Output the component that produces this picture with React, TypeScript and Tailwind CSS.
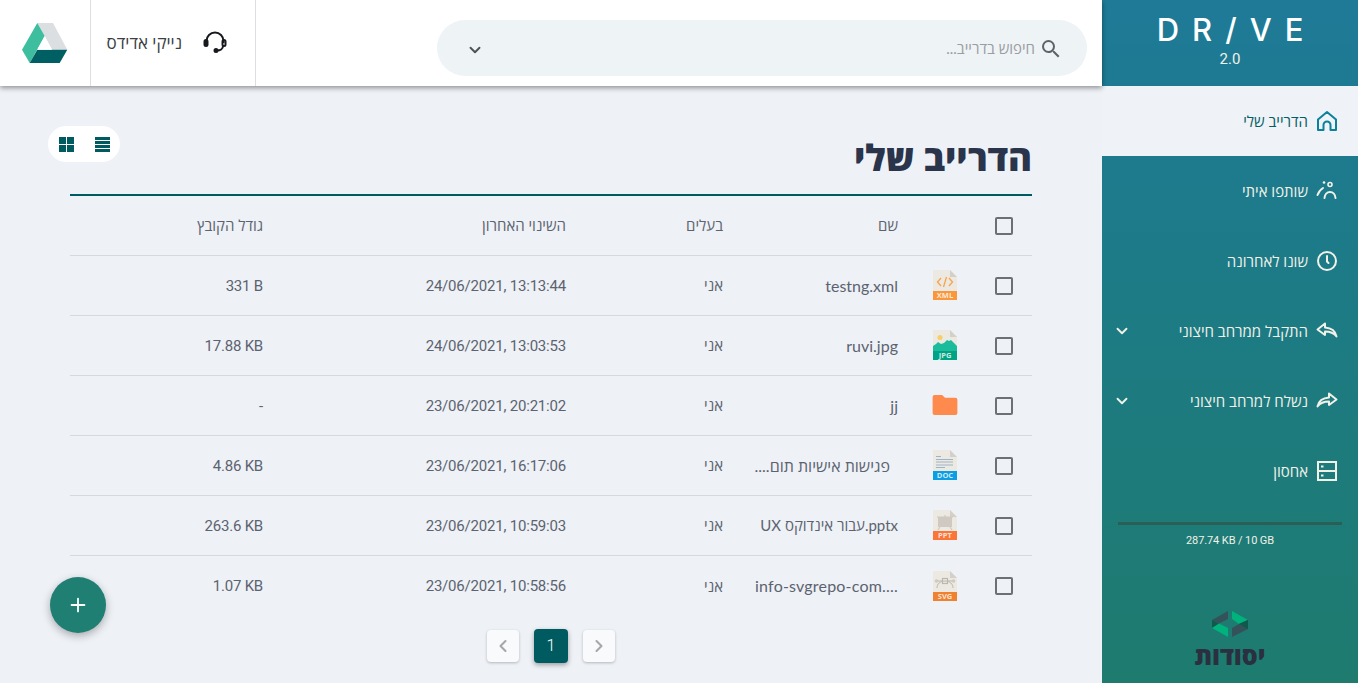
import React from 'react';
import { ChevronDown, ChevronLeft, ChevronRight, Plus } from 'lucide-react';

const font = 'font-["Lato","Open_Sans",sans-serif]';
const numbers = "font-['Roboto'] text-[15px] tracking-[-0.2px]";

const HomeIcon = () => (
  <svg width="22" height="22" viewBox="0 0 22 22" fill="none" stroke="#0b8299" strokeWidth="2" strokeLinejoin="round">
    <path d="M2 9.500 11 2l9 7.500V20H14.500v-5a3.500 3.500 0 0 0-7 0v5H2z" />
  </svg>
);

const PeopleIcon = () => (
  <svg width="22" height="22" viewBox="0 0 22 22" fill="none" stroke="#f2f1e8" strokeWidth="2" strokeLinecap="round">
    <circle cx="14" cy="4.500" r="2" strokeWidth="1.600" />
    <circle cx="8" cy="2.500" r="1.300" fill="#f2f1e8" stroke="none" />
    <path d="M1.500 15c1-3 3-5.500 5.500-7" />
    <path d="M8.500 18c.3-3.500 2.500-6 5.500-6s5.200 2.500 5.500 6" />
  </svg>
);

const ClockIcon = () => (
  <svg width="22" height="22" viewBox="0 0 22 22" fill="none" stroke="#f2f1e8" strokeWidth="2" strokeLinecap="round">
    <circle cx="11" cy="11" r="9" />
    <path d="M11 6v5.500l1.500 1.500" />
  </svg>
);

const ReplyIcon = ({ flip }: { flip?: boolean }) => (
  <svg width="22" height="18" viewBox="0 0 22 18" fill="none" stroke="#f2f1e8" strokeWidth="2" strokeLinejoin="round" className={flip ? '-scale-x-100' : ''}>
    <path d="M9 1.500 1.500 7.500 9 13v-3.500c4.500 0 8.500 1 11.500 5-1-5-4.500-8.500-11.500-9z" />
  </svg>
);

const StorageIcon = () => (
  <svg width="20" height="20" viewBox="0 0 20 20" fill="none" stroke="#f2f1e8" strokeWidth="2">
    <rect x="1" y="1" width="18" height="18" />
    <path d="M1 10h18" />
    <path d="M4 5.500h2.500M4 14.500h2.500" />
  </svg>
);

const SearchIcon = () => (
  <svg width="24" height="24" viewBox="0 0 24 24" fill="#5f6368" className="shrink-0 mt-0.5">
    <path d="M15.500 14h-.79l-.28-.27A6.471 6.471 0 0 0 16 9.500 6.500 6.500 0 1 0 9.500 16c1.610 0 3.090-.59 4.230-1.570l.27.28v.79l5 4.990L20.490 19l-4.990-5zm-6 0C7.010 14 5 11.990 5 9.500S7.010 5 9.500 5 14 7.010 14 9.500 11.990 14 9.500 14z" />
  </svg>
);

const navItems = [
  { label: 'הדרייב שלי', icon: <HomeIcon />, active: true },
  { label: 'שותפו איתי', icon: <PeopleIcon /> },
  { label: 'שונו לאחרונה', icon: <ClockIcon /> },
  { label: 'התקבל ממרחב חיצוני', icon: <ReplyIcon />, more: true },
  { label: 'נשלח למרחב חיצוני', icon: <ReplyIcon flip />, more: true },
  { label: 'אחסון', icon: <StorageIcon /> },
];

const FileIcon = ({ tag, color, children }: { tag: string; color: string; children?: React.ReactNode }) => (
  <svg width="24" height="30" viewBox="0 0 24 30">
    <path d="M0 0h17l7 7v23H0z" fill="#ebe9e1" />
    <path d="M17 0l7 7h-7z" fill="#d3d0c7" />
    {children}
    <rect x="0" y="21" width="24" height="9" fill={color} />
    <text x="12" y="28.300" textAnchor="middle" fontSize="7.500" fontWeight="700" fill="#fff" fillOpacity="0.8" fontFamily="Open Sans, sans-serif">{tag}</text>
  </svg>
);

const FolderIcon = () => (
  <svg width="26" height="20" viewBox="0 0 26 21">
    <path d="M2 0h8l3 3h11a2 2 0 0 1 2 2v14a2 2 0 0 1-2 2H2a2 2 0 0 1-2-2V2a2 2 0 0 1 2-2z" fill="#ff8a4d" />
  </svg>
);

const icons: Record<string, React.ReactNode> = {
  xml: (
    <FileIcon tag="XML" color="#f9973a">
      <path d="M8 8l-3.500 4L8 16M16 8l3.500 4L16 16M13.500 7l-3 10" fill="none" stroke="#f9a34e" strokeWidth="1.300" />
    </FileIcon>
  ),
  jpg: (
    <FileIcon tag="JPG" color="#00a383">
      <circle cx="7" cy="7.500" r="2.500" fill="#f6cf68" />
      <path d="M0 21v-5l3-2 2-2 3 2 3-1 3-3 2 1 2-1 3 3 3 3v5z" fill="#1abc9c" />
    </FileIcon>
  ),
  folder: <FolderIcon />,
  doc: (
    <FileIcon tag="DOC" color="#0c9ee3">
      <path d="M3 6.500h5M3 9.500h17M3 12h17M3 15h17M3 17.500h9" stroke="#9db3c9" strokeWidth="1.200" />
    </FileIcon>
  ),
  ppt: (
    <FileIcon tag="PPT" color="#fb7538">
      <rect x="5" y="7" width="14" height="10" fill="#cfc9c2" />
      <path d="M4 7h16M12 5v2M7 17l-2 3M17 17l2 3" stroke="#cfc9c2" strokeWidth="1.200" />
    </FileIcon>
  ),
  svg: (
    <FileIcon tag="SVG" color="#f0812f">
      <path d="M4 17c0-4 3-7 8-7s8 3 8 7" fill="none" stroke="#bdb6ad" strokeWidth="1" />
      <rect x="9.500" y="7.500" width="5" height="5" fill="none" stroke="#bdb6ad" strokeWidth="1.200" />
      <path d="M2 10h7M15 10h7" stroke="#bdb6ad" strokeWidth="1.200" />
      <circle cx="3.500" cy="10" r="1.800" fill="#cfc9c2" />
      <circle cx="20.500" cy="10" r="1.800" fill="#cfc9c2" />
    </FileIcon>
  ),
};

const rows = [
  { icon: 'xml', name: 'testng.xml', nameCls: 'text-[16px]', date: '24/06/2021, 13:13:44', size: '331 B' },
  { icon: 'jpg', name: 'ruvi.jpg', nameCls: 'text-[16px]', date: '24/06/2021, 13:03:53', size: '17.88 KB' },
  { icon: 'folder', name: 'jj', nameCls: 'text-[16px]', date: '23/06/2021, 20:21:02', size: '-' },
  { icon: 'doc', name: 'פגישות אישיות תום....', nameCls: 'text-[16px] pr-[24px]', date: '23/06/2021, 16:17:06', size: '4.86 KB' },
  { icon: 'ppt', name: 'pptx.עבור אינדוקס UX', nameCls: 'text-[15px]', date: '23/06/2021, 10:59:03', size: '263.6 KB' },
  { icon: 'svg', name: 'info-svgrepo-com....', nameCls: 'text-[16px] tracking-[0.2px]', ltr: true, date: '23/06/2021, 10:58:56', size: '1.07 KB' },
];

const gridCols = 'grid grid-cols-[56px_62px_175px_157px_303px_209px] items-center h-[60px] border-b border-[#d5d9df]';

const Checkbox = () => <div className="w-[18px] h-[18px] border-2 border-[#6d6f73] rounded-[2px] mx-auto" />;

export default function App() {
  return (
    <div dir="rtl" className={`${font} flex w-[1358px] h-[683px] overflow-hidden bg-[#eef1f6] text-[#5c6370]`}>
      {/* sidebar */}
      <aside className="w-[256px] shrink-0 flex flex-col bg-gradient-to-b from-[#1e7a97] to-[#1e7b6e] text-[#f2f1e8]">
        <div className="h-[86px] flex flex-col items-center pt-[10px]">
          <div dir="ltr" className="font-['Inter'] font-medium text-[31px] leading-[39px] tracking-[13px] pl-[13px] text-white">DR/VE</div>
          <div className="font-['Roboto'] text-[15px] leading-[18px] mt-[1px]">2.0</div>
        </div>
        {navItems.map((item) => (
          <div
            key={item.label}
            className={`h-[70px] shrink-0 flex items-center pr-[20px] pl-[11px] text-[15px] ${item.active ? 'bg-[#eff2f7] text-[#035e63]' : ''}`}
          >
            <div className="w-[22px] flex justify-center">{item.icon}</div>
            <span className="mr-[8px]">{item.label}</span>
            {item.more && <ChevronDown size={18} strokeWidth={2.5} className="mr-auto" />}
          </div>
        ))}
        <div className="mx-4 mt-[16px] h-[3px] bg-[#2a5f58]" />
        <div className="font-['Roboto'] text-center text-[11px] tracking-[-0.1px] leading-[16px] mt-[8px]" dir="ltr">287.74 KB / 10 GB</div>
        <div className="flex flex-col items-center mt-[62px]">
          <svg width="36" height="27" viewBox="0 0 36 27">
            <path d="M16 0 0 9v8l7-4.500L16 8z" fill="#34525a" />
            <path d="M0 9l7 4-7 4z" fill="#0f5a4c" />
            <path d="M0 17l7-4.500L16 17v9z" fill="#00b27c" />
            <path d="M20 0l16 9-9 4-7-5z" fill="#00b27c" />
            <path d="M36 9v9l-16 8v-9l7-4z" fill="#34525a" />
            <path d="M36 9l-9 4 9 5z" fill="#0f5a4c" />
          </svg>
          <div className="font-['Open_Sans'] font-extrabold text-[25px] leading-[26px] text-[#2a3040] mt-[4px]">יסודות</div>
        </div>
      </aside>

      {/* main */}
      <main className="relative flex-1 flex flex-col min-w-0">
        <header className="h-[86px] shrink-0 bg-white flex items-center pr-[15px] shadow-[0_2px_5px_rgba(0,0,0,0.4)] z-10">
          <div className="w-[650px] h-[56px] mt-[10px] shrink-0 rounded-[28px] bg-[#eef3f6] flex items-center pr-[24px] pl-[29px]">
            <SearchIcon />
            <span className="mr-[4px] text-[15px] text-[#9a9da1]">חיפוש בדרייב...</span>
            <ChevronDown size={18} strokeWidth={2.5} className="mr-auto mt-1 text-[#4d5156]" />
          </div>
          <div className="mr-[181px] h-full w-[166px] shrink-0 flex items-center border-x border-[#dcdee0] pr-[27px]">
            <svg width="26" height="26" viewBox="0 0 26 26" fill="none" stroke="#17191c" strokeWidth="2">
              <path d="M4.500 13V11a8.500 8.500 0 0 1 17 0v2" />
              <rect x="2.500" y="10" width="3" height="6" rx="1.500" fill="#17191c" />
              <rect x="20.500" y="10" width="3" height="6" rx="1.500" />
              <path d="M21 16c0 3-3 4.500-6 4.500" />
              <circle cx="14" cy="20.500" r="1.500" fill="#17191c" />
            </svg>
            <span className="mr-[20px] text-[17px] text-[#3c3f43]">נייקי אדידס</span>
          </div>
          <div className="w-[90px] h-full shrink-0 flex items-center justify-center">
            <svg width="46" height="40" viewBox="0 0 46 40">
              <path d="M15.300 0H31l14.300 26.700H30z" fill="#dbdfe2" />
              <path d="M15.300 0l7.400 13L7.700 40 0 26.700z" fill="#3dbf9f" />
              <path d="M7.700 40l7.600-13.300h30L37.700 40z" fill="#005f63" />
              <path d="M15.300 26.700 22.700 13 30 26.700z" fill="#fff" />
            </svg>
          </div>
        </header>

        <div className="flex-1 flex flex-col px-[70px] min-h-0">
          <div className="flex items-start justify-between h-[108px] shrink-0 pt-[40px] -ml-[22px]">
            <h1 className="text-[36.500px] leading-[62px] font-['Open_Sans'] font-extrabold text-[#2a344a]">הדרייב שלי</h1>
            <div className="w-[72px] h-[36px] rounded-[18px] bg-white flex items-center justify-center gap-[20px]">
              <svg width="16" height="16" viewBox="-1 -1 16 16" fill="#005b60"><rect width="15" height="15" /><path d="M0 3h15v1H0zM0 7h15v1H0zM0 11h15v1H0z" fill="#fff" /></svg>
              <svg width="16" height="16" viewBox="-1 -1 16 16" fill="#005b60"><rect width="15" height="15" /><path d="M0 7h15v1H0zM7 0h1v15H7z" fill="#fff" /></svg>
            </div>
          </div>
          <div className="text-[15px] border-t-2 border-[#005b60]">
            <div className={gridCols}>
              <Checkbox />
              <div />
              <div className="px-4">שם</div>
              <div className="px-4">בעלים</div>
              <div className="px-4">השינוי האחרון</div>
              <div className="px-4">גודל הקובץ</div>
            </div>
            {rows.map((row, i) => {
              const last = i === rows.length - 1;
              return (
                <div key={row.name} className={`${gridCols} ${last ? 'border-b-0' : ''}`}>
                  <Checkbox />
                  <div className={`flex justify-center ${last ? '' : 'pb-px'}`}>{icons[row.icon]}</div>
                  <div className={`px-4 whitespace-nowrap ${row.nameCls}`}>{row.ltr ? <span dir="ltr">{row.name}</span> : row.name}</div>
                  <div className="px-4">אני</div>
                  <div className="px-4"><span dir="ltr" className={numbers}>{row.date}</span></div>
                  <div className="px-4"><span dir="ltr" className={numbers}>{row.size}</span></div>
                </div>
              );
            })}
          </div>
          <div className="flex justify-center items-center gap-[15px] mt-[13px]">
            <div className="w-[32px] h-[32px] rounded bg-[#f9fafc] shadow-[0_1px_3px_rgba(0,0,0,0.25)] flex items-center justify-center"><ChevronRight size={20} strokeWidth={2.5} className="text-[#a5a7aa]" /></div>
            <div className="w-[34px] h-[34px] rounded bg-[#005b60] shadow-[0_2px_5px_rgba(0,0,0,0.35)] flex items-center justify-center text-white font-['Roboto'] font-light">1</div>
            <div className="w-[32px] h-[32px] rounded bg-[#f9fafc] shadow-[0_1px_3px_rgba(0,0,0,0.25)] flex items-center justify-center"><ChevronLeft size={20} strokeWidth={2.5} className="text-[#a5a7aa]" /></div>
          </div>
        </div>

        <button className="absolute left-[50px] top-[577px] w-[56px] h-[56px] rounded-full bg-[#1f7f72] flex items-center justify-center shadow-[0_3px_8px_rgba(0,0,0,0.3)]">
          <Plus size={22} strokeWidth={2} className="text-white" />
        </button>
      </main>
    </div>
  );
}
